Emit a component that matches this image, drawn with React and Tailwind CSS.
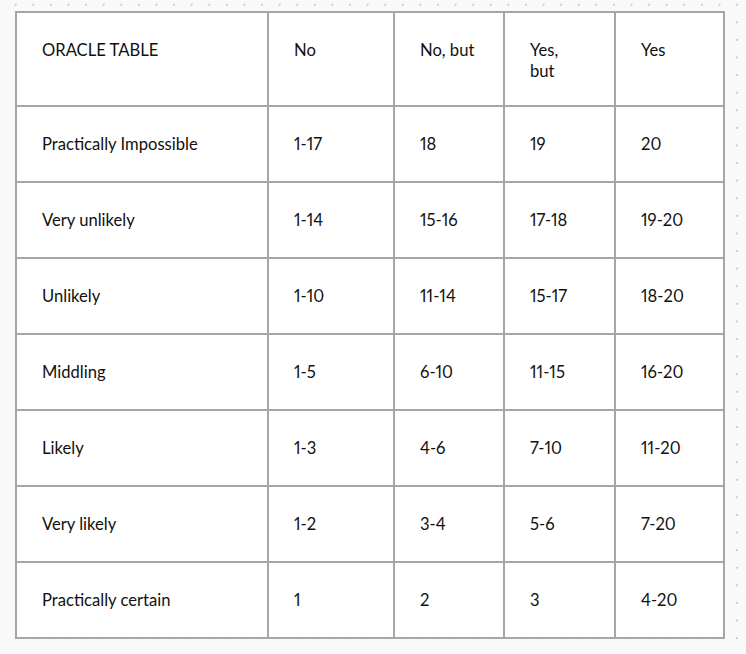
import React from "react";

const header = ["ORACLE TABLE", "No", "No, but", "Yes,\nbut", "Yes"];
const rows = [
  ["Practically Impossible", "1-17", "18", "19", "20"],
  ["Very unlikely", "1-14", "15-16", "17-18", "19-20"],
  ["Unlikely", "1-10", "11-14", "15-17", "18-20"],
  ["Middling", "1-5", "6-10", "11-15", "16-20"],
  ["Likely", "1-3", "4-6", "7-10", "11-20"],
  ["Very likely", "1-2", "3-4", "5-6", "7-20"],
  ["Practically certain", "1", "2", "3", "4-20"],
];

export default function App() {
  return (
    <div className="w-[746px] h-[654px] bg-[#f9f9f9] [background-image:radial-gradient(circle,#cdcdcd_0.9px,transparent_1.3px)] [background-size:17.6px_17.6px] [background-position:6.9px_-4.1px] pt-[11px] pl-[15px] font-['Lato','Noto_Sans',sans-serif] text-[16.6px] leading-[21px] text-[#111] proportional-nums">
      <div className="grid w-[710px] grid-cols-[250px_124px_108px_109px_107px] grid-rows-[92px_repeat(7,74px)] gap-[2px] bg-[#a6a6a6] p-[2px]">
        {header.map((h, i) => (
          <div key={"h" + i} className="bg-white pl-[25px] pt-[27px] whitespace-pre-line">
            {h}
          </div>
        ))}
        {rows.map((r, ri) =>
          r.map((c, ci) => (
            <div key={ri + "-" + ci} className="bg-white pl-[25px] pt-[27px]">
              {c}
            </div>
          ))
        )}
      </div>
    </div>
  );
}
